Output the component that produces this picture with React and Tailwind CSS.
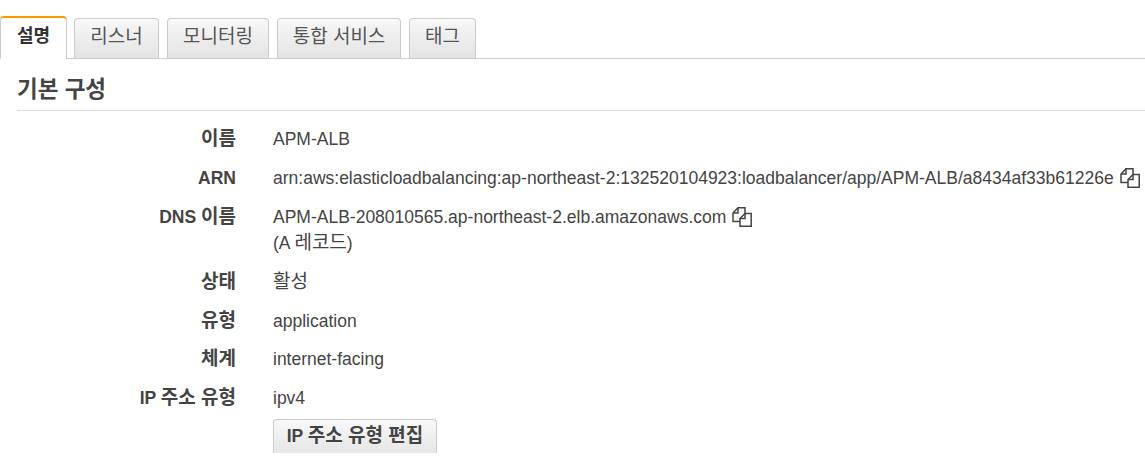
const FONT = "font-['Liberation_Sans','Noto_Sans_CJK_KR',sans-serif]";

const tabs = [
  { label: "리스너", width: "w-[85px]" },
  { label: "모니터링", width: "w-[102px]" },
  { label: "통합 서비스", width: "w-[124px]" },
  { label: "태그", width: "w-[67px]" },
];

// hangul runs larger than latin here, the fallback font sets them narrower than the original
function Ko({ children }) {
  return <span className="text-[19px]">{children}</span>;
}

function CopyIcon() {
  return (
    <svg width="20" height="20" viewBox="0 0 20 20" fill="none" stroke="#444" strokeWidth="1.5" className="shrink-0">
      <path d="M8 14.5H1V6L6 .8h7V6.5" />
      <path d="M6 .8V6H1" />
      <path d="M8 19.3V11.5L13 6.5h6.2v12.8z" fill="#fff" />
      <path d="M13 6.5V11.5H8" />
    </svg>
  );
}

function Row({ label, children, className }) {
  return (
    <div className={`flex items-start ${className}`}>
      <div className="w-[236px] shrink-0 text-right font-bold leading-[24px] text-[#444]">{label}</div>
      <div className="ml-[37px] leading-[24px] text-[#444]">{children}</div>
    </div>
  );
}

export default function App() {
  return (
    <div className={`h-[463px] w-[1145px] overflow-hidden bg-white text-[17.5px] ${FONT}`}>
      <div className="flex h-[59px] items-end border-b border-[#ccc]">
        <div className="relative top-px flex h-[43px] w-[67px] items-center justify-center rounded-t-[4px] border-x border-t-2 border-[#ccc] border-t-[#f90] bg-white pb-[4px] text-[18px] font-bold text-[#333]">
          설명
        </div>
        <div className="ml-[7px] flex gap-[8px]">
          {tabs.map((tab) => (
            <div
              key={tab.label}
              className={`flex h-[40px] items-center justify-center rounded-t-[4px] border-x border-t border-[#ccc] bg-gradient-to-b from-[#f8f8f8] to-[#e3e3e3] pb-[3px] text-[19px] text-[#555] ${tab.width}`}
            >
              {tab.label}
            </div>
          ))}
        </div>
      </div>

      <div className="ml-[17px] flex h-[52px] items-center border-b border-[#ddd] pt-[10px] text-[22.5px] font-bold text-[#444]">
        기본 구성
      </div>

      <div className="pt-[16px]">
        <Row label={<Ko>이름</Ko>}>APM-ALB</Row>
        <Row label="ARN" className="mt-[15px]">
          <span className="flex items-center gap-[6px] whitespace-nowrap">
            arn:aws:elasticloadbalancing:ap-northeast-2:132520104923:loadbalancer/app/APM-ALB/a8434af33b61226e
            <CopyIcon />
          </span>
        </Row>
        <Row label={<>DNS <Ko>이름</Ko></>} className="mt-[15px]">
          <span className="flex items-center gap-[6px] whitespace-nowrap">
            APM-ALB-208010565.ap-northeast-2.elb.amazonaws.com
            <CopyIcon />
          </span>
          <div className="mt-[2px]">(A <Ko>레코드</Ko>)</div>
        </Row>
        <Row label={<Ko>상태</Ko>} className="mt-[15px]"><Ko>활성</Ko></Row>
        <Row label={<Ko>유형</Ko>} className="mt-[15px]">application</Row>
        <Row label={<Ko>체계</Ko>} className="mt-[14px]">internet-facing</Row>
        <Row label={<>IP <Ko>주소 유형</Ko></>} className="mt-[15px]">ipv4</Row>
        <div className="ml-[273px] mt-[9px] flex h-[34px] w-[164px] items-center justify-center rounded-t-[4px] border-x border-t border-[#ccc] bg-gradient-to-b from-[#f8f8f8] to-[#e6e6e6] font-bold text-[#444]">
          <span>IP <Ko>주소 유형 편집</Ko></span>
        </div>
      </div>
    </div>
  );
}
